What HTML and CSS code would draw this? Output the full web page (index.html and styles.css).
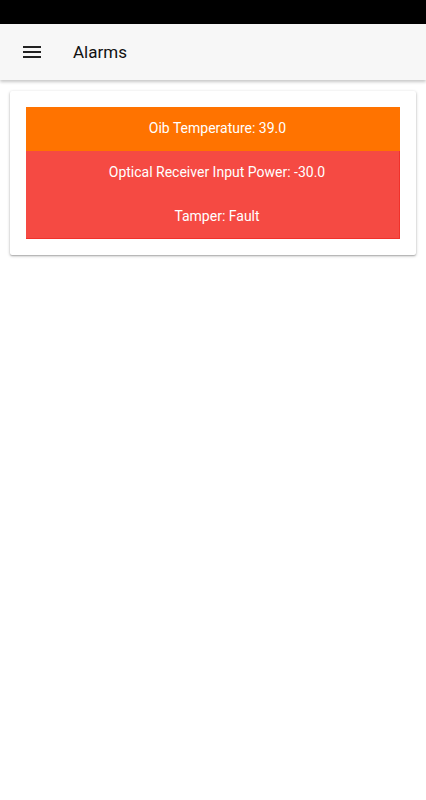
FILE: index.html
```html
<!DOCTYPE html>
<html>
<head>
<meta charset="utf-8">
<link rel="stylesheet" href="styles.css">
</head>
<body>
<div class="status-bar"></div>
<header class="app-bar">
  <button class="menu-btn" aria-label="Menu">
    <svg width="18" height="12" viewBox="0 0 18 12"><rect x="0" y="0" width="18" height="2" fill="#222"/><rect x="0" y="5" width="18" height="2" fill="#222"/><rect x="0" y="10" width="18" height="2" fill="#222"/></svg>
  </button>
  <h1 class="title">Alarms</h1>
</header>
<main class="content">
  <section class="card">
    <div class="alarm alarm-warn">Oib Temperature: 39.0</div>
    <div class="alarm alarm-crit">Optical Receiver Input Power: -30.0</div>
    <div class="alarm alarm-crit">Tamper: Fault</div>
  </section>
</main>
</body>
</html>
```

FILE: styles.css
```css
html, body {
  margin: 0;
  padding: 0;
  background: #ffffff;
  font-family: Roboto, "Noto Sans", sans-serif;
}
.status-bar {
  height: 24px;
  background: #000000;
}
.app-bar {
  height: 56px;
  background: #f7f7f7;
  display: flex;
  align-items: center;
  box-shadow: 0 2px 3px rgba(0,0,0,0.22);
  position: relative;
  z-index: 1;
}
.menu-btn {
  border: 0;
  background: transparent;
  padding: 0;
  margin-left: 23px;
  width: 18px;
  height: 12px;
  display: flex;
}
.title {
  margin: 0 0 0 32px;
  font-size: 17px;
  font-weight: 400;
  color: #111;
  padding-bottom: 1px;
}
.content {
  padding: 11px 10px;
}
.card {
  background: #fff;
  padding: 16px;
  border-radius: 2px;
  box-shadow: 0 1px 3px rgba(0,0,0,0.3), 0 1px 1px rgba(0,0,0,0.12);
}
.alarm {
  height: 44px;
  display: flex;
  align-items: center;
  justify-content: center;
  color: #fff;
  font-size: 14px;
  padding: 0 0 2px 9px;
  box-sizing: border-box;
}
.alarm-warn {
  background: #ff7300;
}
.alarm-crit {
  background: #f54a43;
  border-right: 1px solid #f0322b;
}
.alarm-crit:last-child {
  border-bottom: 1px solid #f0322b;
}
```
